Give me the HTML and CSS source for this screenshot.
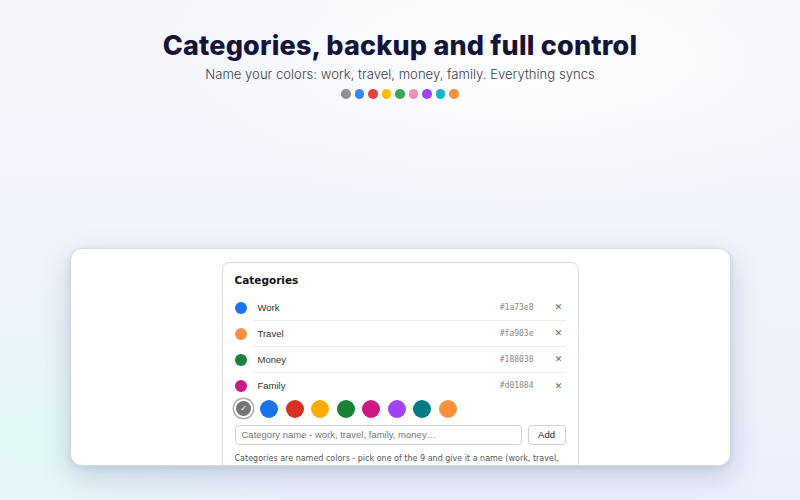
FILE: index.html
```html
<!DOCTYPE html>
<html>
<head>
<meta charset="utf-8">
<link rel="stylesheet" href="styles.css">
</head>
<body>
<div class="page">
  <header class="hero">
    <h1 class="title">Categories, backup and full control</h1>
    <p class="subtitle">Name your colors: work, travel, money, family. Everything syncs</p>
    <div class="dots">
      <span class="dot c-gray"></span>
      <span class="dot c-blue"></span>
      <span class="dot c-red"></span>
      <span class="dot c-amber"></span>
      <span class="dot c-green"></span>
      <span class="dot c-pink"></span>
      <span class="dot c-purple"></span>
      <span class="dot c-cyan"></span>
      <span class="dot c-orange"></span>
    </div>
  </header>

  <div class="window">
    <div class="panel">
      <div class="panel-title">Categories</div>
      <ul class="cat-list">
        <li class="cat">
          <span class="cat-dot s-blue"></span>
          <div class="cat-body">
            <span class="cat-name">Work</span>
            <span class="cat-hex">#1a73e8</span>
            <span class="cat-x">✕</span>
          </div>
        </li>
        <li class="cat">
          <span class="cat-dot s-orange"></span>
          <div class="cat-body">
            <span class="cat-name">Travel</span>
            <span class="cat-hex">#fa903e</span>
            <span class="cat-x">✕</span>
          </div>
        </li>
        <li class="cat">
          <span class="cat-dot s-green"></span>
          <div class="cat-body">
            <span class="cat-name">Money</span>
            <span class="cat-hex">#188038</span>
            <span class="cat-x">✕</span>
          </div>
        </li>
        <li class="cat">
          <span class="cat-dot s-magenta"></span>
          <div class="cat-body last">
            <span class="cat-name">Family</span>
            <span class="cat-hex">#d01884</span>
            <span class="cat-x">✕</span>
          </div>
        </li>
      </ul>
      <div class="swatches">
        <span class="swatch s-gray selected">✓</span>
        <span class="swatch s-blue"></span>
        <span class="swatch s-red"></span>
        <span class="swatch s-amber"></span>
        <span class="swatch s-green"></span>
        <span class="swatch s-magenta"></span>
        <span class="swatch s-purple"></span>
        <span class="swatch s-teal"></span>
        <span class="swatch s-orange"></span>
      </div>
      <div class="add-row">
        <input class="name-input" type="text" placeholder="Category name - work, travel, family, money…">
        <button class="add-btn">Add</button>
      </div>
      <p class="help">Categories are named colors - pick one of the 9 and give it a name (work, travel, family, money). Events use them.</p>
    </div>
  </div>
</div>
</body>
</html>
```
FILE: styles.css
```css
* { box-sizing: border-box; }
html, body { margin: 0; padding: 0; }
body {
  width: 800px;
  height: 500px;
  overflow: hidden;
  background:
    radial-gradient(ellipse 380px 240px at 40px 440px, rgba(225, 250, 246, 0.85), rgba(225, 250, 246, 0) 70%),
    radial-gradient(ellipse 520px 200px at 520px 60px, rgba(255, 255, 255, 0.9), rgba(255, 255, 255, 0) 75%),
    linear-gradient(180deg, #f5f6fb 0%, #f2f4fb 45%, #eceffa 100%);
  font-family: "DejaVu Sans", sans-serif;
}
.page {
  display: flex;
  flex-direction: column;
  align-items: center;
}
.hero {
  display: flex;
  flex-direction: column;
  align-items: center;
  padding-top: 30px;
}
.title {
  margin: 0;
  font-family: "Inter", sans-serif;
  font-weight: 800;
  font-size: 27px;
  line-height: 32px;
  letter-spacing: 0.2px;
  color: #14143a;
}
.subtitle {
  margin: 3px 0 0;
  font-family: "Inter", sans-serif;
  font-weight: 300;
  font-size: 13.1px;
  line-height: 18px;
  color: #3d4050;
}
.dots {
  display: flex;
  gap: 4px;
  margin-top: 6px;
}
.dot {
  width: 9.5px;
  height: 9.5px;
  border-radius: 50%;
}
.c-gray { background: #8e8f94; }
.c-blue { background: #3d86f5; }
.c-red { background: #ea4335; }
.c-amber { background: #fbbc04; }
.c-green { background: #34a853; }
.c-pink { background: #f28fb5; }
.c-purple { background: #a142f4; }
.c-cyan { background: #12b5cb; }
.c-orange { background: #fa903e; }

.window {
  margin-top: 149px;
  width: 661px;
  height: 218px;
  background: #fff;
  border-radius: 12px;
  border: 1px solid #d6d8e0;
  box-shadow: 0 10px 30px rgba(70, 80, 140, 0.22), 0 2px 6px rgba(70, 80, 140, 0.12);
  overflow: hidden;
  display: flex;
  justify-content: center;
  padding-top: 13px;
}
.panel {
  width: 357px;
  border: 1px solid #dedede;
  border-radius: 8px;
  padding: 10px 12px 0;
  align-self: flex-start;
}
.panel-title {
  font-family: "DejaVu Sans", sans-serif;
  font-weight: bold;
  font-size: 10.5px;
  line-height: 14px;
  color: #111;
  margin-bottom: 8px;
}
.cat-list {
  list-style: none;
  margin: 0;
  padding: 0;
}
.cat {
  display: flex;
  align-items: center;
  height: 26px;
}
.cat-dot {
  width: 12px;
  height: 12px;
  border-radius: 50%;
  flex: none;
  margin-right: 6px;
}
.cat-body {
  flex: 1;
  height: 26px;
  display: flex;
  align-items: center;
  border-bottom: 1px solid #ececec;
  padding-left: 5px;
}
.cat-body.last { border-bottom: none; }
.cat-name {
  flex: 1;
  font-family: "Liberation Sans", sans-serif;
  font-size: 9.5px;
  color: #333;
}
.cat-hex {
  font-family: "DejaVu Sans Mono", monospace;
  font-size: 8px;
  color: #888;
  margin-right: 18px;
}
.cat-x {
  width: 14px;
  text-align: center;
  font-size: 9px;
  color: #666;
  font-family: "DejaVu Sans", sans-serif;
}
.s-gray { background: #757575; }
.s-blue { background: #1a73e8; }
.s-red { background: #d93025; }
.s-amber { background: #f9ab00; }
.s-green { background: #188038; }
.s-magenta { background: #d01884; }
.s-purple { background: #a142f4; }
.s-teal { background: #007b83; }
.s-orange { background: #fa903e; }
.swatches {
  display: flex;
  align-items: center;
  gap: 7.5px;
  height: 22px;
  margin-top: -1px;
}
.swatch {
  width: 18px;
  height: 18px;
  border-radius: 50%;
  flex: none;
  display: flex;
  align-items: center;
  justify-content: center;
  color: #fff;
  font-size: 8px;
  font-family: "DejaVu Sans", sans-serif;
}
.swatch.selected {
  box-shadow: 0 0 0 2px #fff, 0 0 0 3.5px #b0b0b0;
  width: 15px;
  height: 15px;
  margin: 0 1.5px;
}
.add-row {
  display: flex;
  gap: 6px;
  margin-top: 5px;
}
.name-input {
  flex: 1;
  height: 20px;
  border: 1px solid #cfcfcf;
  border-radius: 4px;
  padding: 0 6px;
  font-family: "Liberation Sans", sans-serif;
  font-size: 9.5px;
  color: #333;
  outline: none;
}
.name-input::placeholder { color: #777; }
.add-btn {
  width: 38px;
  height: 20px;
  border: 1px solid #cfcfcf;
  border-radius: 4px;
  background: #fff;
  font-family: "Liberation Sans", sans-serif;
  font-size: 9.5px;
  color: #222;
  padding: 0;
}
.help {
  margin: 7px 0 0;
  font-family: "DejaVu Sans", sans-serif;
  font-size: 8px;
  line-height: 13px;
  color: #555;
}
```
